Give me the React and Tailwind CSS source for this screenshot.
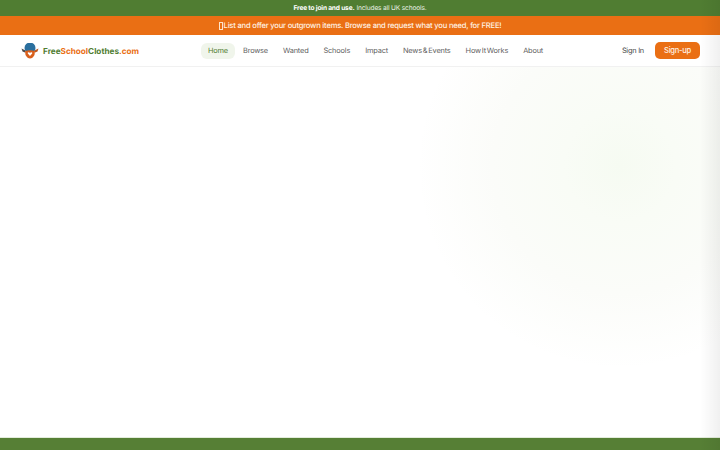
const navLinks = ["Browse", "Wanted", "Schools", "Impact", "News & Events", "How It Works", "About"];

const Logo = () => (
  <svg width="18" height="16" viewBox="0 0 18 16" className="shrink-0">
    <path d="M0.5 5.5 L4.5 7.5 L4 9.5 L1.5 8.5 Z" fill="#4a4a4a" />
    <path d="M17.5 5.5 L13.5 7.5 L14 9.5 L16.5 8.5 Z" fill="#c0561a" />
    <circle cx="9" cy="5" r="5.5" fill="#2a6f9e" />
    <path d="M4 8 Q9 6.5 14 8 L13.5 12 Q11.5 15.5 9 15.5 Q6.5 15.5 4.5 12 Z" fill="#d9601c" />
    <path d="M9 13 L6.8 10.6 Q6.4 9.2 7.7 9.2 Q8.6 9.2 9 10 Q9.4 9.2 10.3 9.2 Q11.6 9.2 11.2 10.6 Z" fill="#ffffff" />
  </svg>
);

const App = () => {
  return (
    <div className="relative flex h-[450px] w-[720px] flex-col overflow-hidden bg-white font-['Inter',sans-serif] [text-rendering:geometricPrecision]">
      <div className="flex h-4 items-center justify-center bg-[#507d32] pt-px text-[6.6px] tracking-[-0.17px] text-[#e6eee0]">
        <span className="font-bold text-white">Free to join and use.</span>
        <span className="ml-[2px]">Includes all UK schools.</span>
      </div>
      <div className="flex h-[19px] items-center justify-center bg-[#ea6f14] pt-px text-[7.6px] font-medium tracking-[-0.2px] text-[#fff3e6]">
        <span className="mr-[1px] inline-block h-[8px] w-[4px] border border-[#ffe3c8]" />
        <span>List and offer your outgrown items. Browse and request what you need, for FREE!</span>
      </div>

      <header className="relative z-10 flex h-8 items-center border-b border-[#f1f1f1] bg-white pl-[21px] pr-5 pt-px">
        <div className="flex w-[180px] items-center gap-[4px]">
          <Logo />
          <span className="text-[8.2px] font-bold text-[#507d32]">
            Free<span className="text-[#ea6f14]">School</span>Clothes<span className="text-[#ea6f14]">.com</span>
          </span>
        </div>
        <nav className="flex items-center text-[7.4px] tracking-[-0.18px] [word-spacing:-1px] text-[#5f5f5f]">
          <a className="rounded-md bg-[#f0f5eb] px-[7px] py-[2px] text-[#507d32]">Home</a>
          {navLinks.map((link) => (
            <a key={link} className="ml-[1px] px-[7px] py-[2px]">
              {link}
            </a>
          ))}
        </nav>
        <div className="ml-auto flex items-center gap-[11px]">
          <a className="text-[7.4px] tracking-[-0.25px] text-[#4a4a4a]">Sign In</a>
          <button className="-mt-px h-[17px] w-[45px] rounded-[5px] bg-[#ea6f14] text-[7.6px] font-medium tracking-[-0.27px] text-[#fff3e6]">Sign-up</button>
        </div>
      </header>

      <main className="relative flex-1 overflow-hidden bg-white">
        <div className="absolute left-[420px] top-[-101px] h-[400px] w-[400px] rounded-full bg-[radial-gradient(circle,#f6fbf2_0%,#f9fcf6_20%,#fbfcf9_45%,#ffffff_72%)]" />
      </main>

      <footer className="h-[13px] border-t border-[#e3ecdc] bg-[#567f35]" />

      <div className="pointer-events-none absolute inset-y-0 right-0 z-20 w-5 bg-gradient-to-r from-transparent to-[#0000000f]" />
    </div>
  );
};

export default App;
